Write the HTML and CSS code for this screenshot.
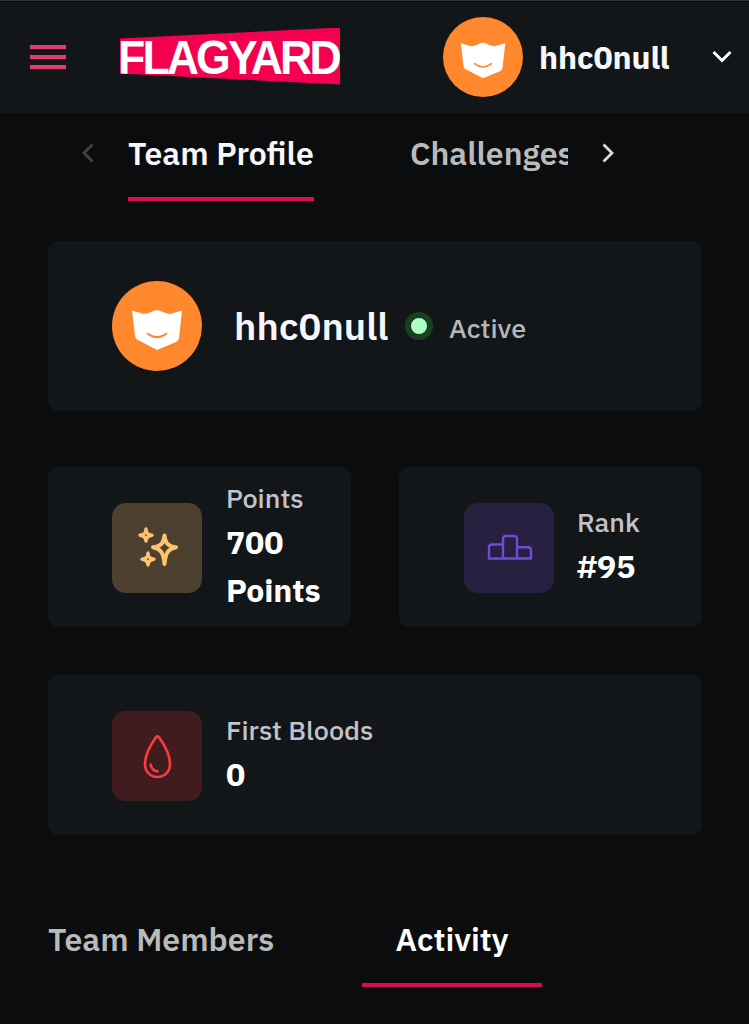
FILE: index.html
```html
<!DOCTYPE html>
<html lang="en">
<head>
<meta charset="utf-8">
<meta name="viewport" content="width=device-width, initial-scale=1">
<title>FlagYard</title>
<link rel="stylesheet" href="styles.css">
</head>
<body>
<svg width="0" height="0" class="defs" aria-hidden="true">
  <symbol id="mask" viewBox="0 0 90 90">
    <circle cx="45" cy="45" r="45" fill="#ff872e"/>
    <path d="M20 29.500 32 33 38 31.500Q42 29 45 29Q48 29 52 31.500L58 33 70 29.500 67 57Q66.500 59.500 64 61L45 69 25 58.500Q23.300 57.500 23 55Z" fill="#fff"/>
    <path d="M35.500 52.500Q45 60 54.500 52.500" fill="none" stroke="#ff872e" stroke-width="1.800" stroke-linecap="round"/>
  </symbol>
</svg>
<header class="topbar">
  <button class="menu" aria-label="Menu"><span></span><span></span><span></span></button>
  <a class="logo"><span class="logo-text">FLAGYARD</span></a>
  <div class="account">
    <svg class="avatar-sm"><use href="#mask"/></svg>
    <span class="account-name">hhc0null</span>
    <svg class="caret" viewBox="0 0 20 13"><path d="M1.500 2 10 10.500 18.500 2" fill="none" stroke="#fff" stroke-width="3"/></svg>
  </div>
</header>
<nav class="tabs">
  <svg class="arrow dim" viewBox="0 0 13 20"><path d="M11.500 1.500 3 10 11.500 18.500" fill="none" stroke="currentColor" stroke-width="2.800"/></svg>
  <div class="tabs-view">
    <a class="tab active">Team Profile</a>
    <a class="tab">Challenges</a>
  </div>
  <svg class="arrow" viewBox="0 0 13 20"><path d="M1.500 1.500 10 10 1.500 18.500" fill="none" stroke="currentColor" stroke-width="2.800"/></svg>
</nav>
<main class="content">
  <section class="card profile">
    <svg class="avatar"><use href="#mask"/></svg>
    <h1 class="team-name">hhc0null</h1>
    <span class="dot"></span>
    <span class="status">Active</span>
  </section>
  <section class="stats">
    <div class="card stat">
      <div class="icon gold">
        <svg viewBox="0 0 90 90" fill="none" stroke="#ffc370" stroke-linecap="round" stroke-linejoin="round">
          <path stroke-width="4" d="M52.500 32.500C53 39.500 55.500 43 64 44.300C56 46 53.500 50 52.500 61C51.500 50 49 46 41 44.300C49.500 43 52 39.500 52.500 32.500Z"/>
          <path stroke-width="3.400" d="M34 26C34.200 30 35.500 31.800 40 32.200C35.500 32.600 34.200 34.500 34 38C33.800 34.500 32.500 32.600 28 32.200C32.500 31.800 33.800 30 34 26ZM36 50C36.200 54 37.500 55.800 42 56.200C37.500 56.600 36.200 58.500 36 62C35.800 58.500 34.500 56.600 30 56.200C34.500 55.800 35.800 54 36 50Z"/>
        </svg>
      </div>
      <div class="stat-text"><div class="label">Points</div><div class="value">700<br>Points</div></div>
    </div>
    <div class="card stat">
      <div class="icon violet">
        <svg viewBox="0 0 90 90" fill="none" stroke="#6f4bd8" stroke-width="2.400">
          <path d="M25 55.500V44.500Q25 41.500 28 41.500H39M39 55.500V36Q39 33 42 33H50Q53 33 53 36V55.500M53 44.300H64Q67 44.300 67 47.300V55.500M23.900 55.500H68.100"/>
        </svg>
      </div>
      <div class="stat-text"><div class="label">Rank</div><div class="value">#95</div></div>
    </div>
    <div class="card stat wide">
      <div class="icon red">
        <svg viewBox="0 0 90 90" fill="none" stroke="#fb3c3f" stroke-width="2.600" stroke-linejoin="round">
          <path d="M43.800 26.500Q45.500 24.300 47.200 26.500C53 34.500 58 44.500 58 53.500A12.500 12.500 0 0 1 33 53.500C33 44.500 38 34.500 43.800 26.500Z"/>
          <path d="M38.500 52.500Q39 60 46.500 60.600"/>
        </svg>
      </div>
      <div class="stat-text"><div class="label">First Bloods</div><div class="value">0</div></div>
    </div>
  </section>
  <nav class="subtabs">
    <a class="subtab">Team Members</a>
    <a class="subtab active">Activity</a>
  </nav>
</main>
</body>
</html>
```
FILE: styles.css
```css
* { box-sizing: border-box; }
body {
  margin: 0;
  height: 1024px;
  overflow: hidden;
  background: #0b0c0e;
  color: #fff;
  font-family: "IBM Plex Sans", Roboto, sans-serif;
  font-weight: 500;
}
.defs { position: absolute; }
.topbar {
  display: flex;
  align-items: center;
  height: 113px;
  padding: 0 17px 1px 30px;
  background: #121619;
  border-top: 1px solid #30383c;
  box-shadow: inset 0 1px #070a0c;
}
.menu {
  display: grid;
  gap: 6px;
  width: 36px;
  padding: 0;
  border: 0;
  background: none;
}
.menu span { height: 4px; background: #e73a72; }
.logo {
  display: flex;
  align-items: center;
  width: 220px;
  height: 58px;
  margin-left: 54px;
  background: #f3004f;
  clip-path: polygon(0 11px, 100% 0, 100% 57px, 0 46px);
}
.logo-text {
  font: 700 48px/58px "Liberation Sans", sans-serif;
  letter-spacing: -3.1px;
  margin-left: -2px;
  padding-top: 2px;
  white-space: nowrap;
  transform: scaleX(.93);
  transform-origin: 0 50%;
}
.account {
  display: flex;
  align-items: center;
  flex: 1;
  margin-left: 103px;
}
.avatar-sm { width: 80px; height: 80px; flex: none; }
.account-name {
  margin-left: 16px;
  font-size: 32px;
  font-weight: 700;
  letter-spacing: -0.1px;
  color: #f8f8fc;
}
.caret { width: 20px; height: 13px; margin-left: auto; }
.tabs {
  display: flex;
  height: 88px;
  padding-left: 81px;
}
.arrow { width: 13px; height: 20px; margin-top: 30px; color: #d9d9da; flex: none; }
.arrow.dim { color: #414244; }
.tabs-view {
  display: flex;
  gap: 96px;
  width: 440px;
  margin: 0 34px;
  overflow: hidden;
}
.tab {
  flex: none;
  height: 88px;
  font-size: 32px;
  font-weight: 600;
  line-height: 80px;
  color: #b9babc;
}
.tab.active {
  width: 186px;
  color: #f8f8fc;
  border-bottom: 4px solid #dc0c51;
}
.content { padding: 40px 47px 0 48px; }
.card {
  display: flex;
  align-items: center;
  background: #121619;
  border-radius: 10px;
}
.profile { height: 170px; padding-left: 64px; }
.avatar { width: 90px; height: 90px; }
.team-name {
  margin: 0 0 2px 32px;
  width: 155px;
  font-size: 38px;
  font-weight: 600;
  letter-spacing: 0.1px;
  color: #f7f6fd;
}
.dot {
  width: 28px;
  height: 28px;
  margin-left: 16px;
  border: 6px solid #1b4021;
  border-radius: 50%;
  background: #aeffc6;
}
.status { margin: 2px 0 0 16px; font-size: 27px; color: #b5b6b8; }
.stats {
  display: grid;
  grid-template-columns: 303px 303px;
  gap: 48px;
  margin-top: 56px;
}
.stat { height: 160px; padding-left: 64px; gap: 24px; }
.wide { grid-column: span 2; }
.icon { width: 90px; height: 90px; margin-top: 2px; border-radius: 14px; flex: none; }
.icon svg { display: block; width: 90px; height: 90px; }
.gold { background: #4d402e; }
.violet { background: #272040; margin-left: 1px; margin-right: -1px; }
.red { background: #401c1f; }
.stat-text { margin-bottom: 2px; }
.label { font-size: 27px; line-height: 40px; color: #c4c2cb; }
.value { font-size: 32px; line-height: 48px; font-weight: 700; letter-spacing: -0.1px; }
.subtabs { display: flex; margin-top: 65px; gap: 88px; }
.subtab {
  height: 87px;
  font-size: 32px;
  font-weight: 600;
  line-height: 79px;
  color: #b9babc;
  white-space: nowrap;
}
.subtab:first-child { width: 226px; }
.subtab.active {
  width: 180px;
  color: #fff;
  text-align: center;
  border-bottom: 4px solid #dc0c51;
}
```
